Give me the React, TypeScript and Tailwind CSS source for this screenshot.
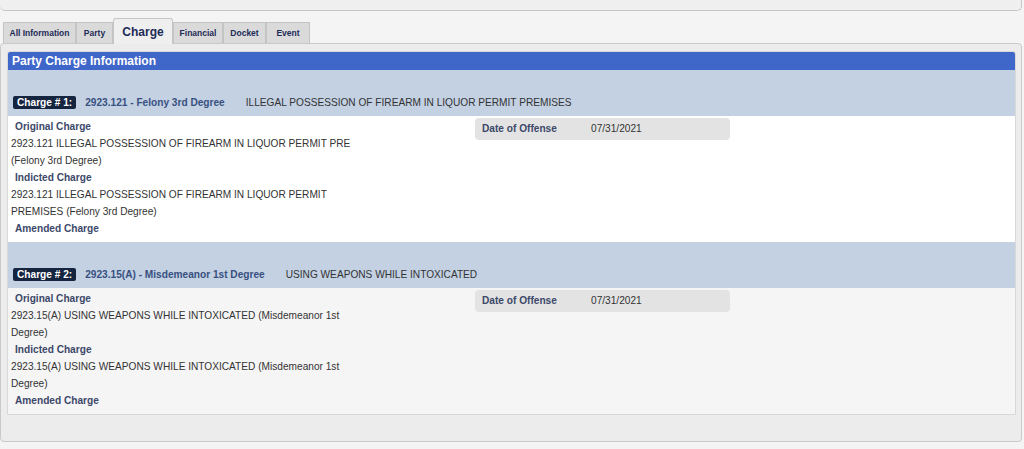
const tabs = [
  { label: 'All Information', w: 'w-[73px]' },
  { label: 'Party', w: 'w-[37px]' },
  { label: 'Charge', w: 'w-[60px]', active: true },
  { label: 'Financial', w: 'w-[50px]' },
  { label: 'Docket', w: 'w-[43px]' },
  { label: 'Event', w: 'w-[44px]' },
]

const charges = [
  {
    num: 1,
    code: '2923.121 - Felony 3rd Degree',
    desc: 'ILLEGAL POSSESSION OF FIREARM IN LIQUOR PERMIT PREMISES',
    original: '2923.121 ILLEGAL POSSESSION OF FIREARM IN LIQUOR PERMIT PRE (Felony 3rd Degree)',
    indicted: '2923.121 ILLEGAL POSSESSION OF FIREARM IN LIQUOR PERMIT PREMISES (Felony 3rd Degree)',
    date: '07/31/2021',
    bg: 'bg-white',
  },
  {
    num: 2,
    code: '2923.15(A) - Misdemeanor 1st Degree',
    desc: 'USING WEAPONS WHILE INTOXICATED',
    original: '2923.15(A) USING WEAPONS WHILE INTOXICATED (Misdemeanor 1st Degree)',
    indicted: '2923.15(A) USING WEAPONS WHILE INTOXICATED (Misdemeanor 1st Degree)',
    date: '07/31/2021',
    bg: 'bg-[#f6f5f5]',
  },
]

function Label({ children }: { children: string }) {
  return <div className="pl-[4px] font-bold text-[#3c4869]">{children}</div>
}

function ChargeBlock({ c }: { c: (typeof charges)[number] }) {
  return (
    <div>
      <div className="flex h-[46px] items-end bg-[#c3d1e3] pb-[6px] pl-[5px]">
        <div className="flex items-center">
          <span className="rounded-[2px] bg-[#15243f] px-[4px] leading-[13px] font-bold text-white">
            Charge # {c.num}:
          </span>
          <span className="ml-[9px] font-bold text-[#38507f]">{c.code}</span>
          <span className="ml-[21px] text-[#333]">{c.desc}</span>
        </div>
      </div>
      <div className={`flex ${c.bg} pb-[5px] pl-[3px] pt-[2px]`}>
        <div className="w-[358px] leading-[17px] text-[#333]">
          <Label>Original Charge</Label>
          <div>{c.original}</div>
          <Label>Indicted Charge</Label>
          <div>{c.indicted}</div>
          <Label>Amended Charge</Label>
        </div>
        <div className="ml-[106px] flex h-[22px] w-[255px] items-center rounded-[4px] bg-[#e3e3e3] pl-[7px]">
          <span className="w-[109px] font-bold text-[#3c4869]">Date of Offense</span>
          <span className="text-[#333]">{c.date}</span>
        </div>
      </div>
    </div>
  )
}

export default function App() {
  return (
    <div className="h-[449px] w-[1024px] overflow-hidden bg-[#f4f4f4] font-['Liberation_Sans',Arial,sans-serif] text-[10.15px]">
      <div className="h-[11px] w-[1022px] rounded-b-[5px] border-b border-r border-[#c6c6c6] bg-[#efefef]" />

      <div className="mt-[7px] flex items-end pl-[3px]">
        {tabs.map((t) =>
          t.active ? (
            <div
              key={t.label}
              className={`${t.w} relative z-10 -mb-px flex h-[26px] items-center justify-center rounded-t-[3px] border border-b-0 border-[#c6c6c6] bg-[#efefef] text-[12px] font-bold text-[#1d2b57]`}
            >
              {t.label}
            </div>
          ) : (
            <div
              key={t.label}
              className={`${t.w} flex h-[21px] items-center justify-center border border-b-0 border-[#c4c4c4] bg-[#dadada] text-[8.5px] font-bold text-[#1d2b57]`}
            >
              {t.label}
            </div>
          )
        )}
      </div>

      <div className="h-[399px] w-[1022px] rounded-[4px] border border-[#c9c9c9] bg-[#ececec] pb-[25px] pl-[6px] pr-[5px] pt-[7px]">
        <div className="overflow-hidden rounded-t-[3px] border border-[#d8d8d8] bg-white">
          <div className="flex h-[18px] items-center bg-[#3f66c9] pl-[4px] text-[12px] font-bold text-white">
            Party Charge Information
          </div>
          {charges.map((c) => (
            <ChargeBlock key={c.num} c={c} />
          ))}
        </div>
      </div>
    </div>
  )
}
